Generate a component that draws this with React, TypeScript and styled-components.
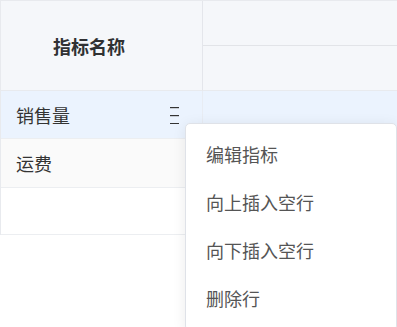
import React from "react";
import styled, { createGlobalStyle } from "styled-components";

const Global = createGlobalStyle`
  html, body { margin: 0; padding: 0; background: #fff; overflow: hidden; }
  body { font-family: "Noto Sans CJK SC", "Noto Sans", sans-serif; }
`;

const Page = styled.div`
  position: relative;
  width: 397px;
  height: 327px;
  overflow: hidden;
`;

const Table = styled.div`
  display: grid;
  grid-template-columns: 202px 260px;
  border-top: 1px solid #e8eaee;
  border-left: 1px solid #e8eaee;
  width: 462px;
`;

const HeadCell = styled.div`
  grid-row: span 2;
  height: 90px;
  box-sizing: border-box;
  background: #f5f7fa;
  border-right: 1px solid #e4e6eb;
  border-bottom: 1px solid #e8eaee;
  display: flex;
  align-items: center;
  padding-left: 52px;
  font-size: 18px;
  font-weight: 700;
  color: #303133;
`;

const HeadSub = styled.div<{ $last?: boolean }>`
  height: 45px;
  box-sizing: border-box;
  background: #f5f7fa;
  border-bottom: 1px solid ${(p) => (p.$last ? "#e8eaee" : "#e2e4e8")};
`;

const Cell = styled.div<{ $bg: string; $line?: boolean; $h: number }>`
  height: ${(p) => p.$h}px;
  box-sizing: border-box;
  background: ${(p) => p.$bg};
  border-bottom: 1px solid #eceef1;
  border-right: ${(p) => (p.$line ? "1px solid #e8ecf3" : "none")};
  display: flex;
  align-items: center;
  justify-content: space-between;
  padding: 0 23px 0 15px;
  font-size: 18px;
  color: #333;
`;

const MenuIcon = styled.svg`
  width: 9px;
  height: 17px;
  margin-top: 2px;
`;

const Popup = styled.div`
  position: absolute;
  left: 185px;
  top: 123px;
  width: 212px;
  box-sizing: border-box;
  padding: 6px 0 8px;
  background: #fff;
  border: 1px solid #dfe2e8;
  border-radius: 5px;
  box-shadow: 0 2px 14px rgba(0, 0, 0, 0.08);
`;

const Item = styled.div`
  height: 48px;
  display: flex;
  align-items: center;
  padding-left: 20px;
  font-size: 18px;
  color: #555;
`;

const rows = [
  { name: "销售量", bg: "#ebf3fe", icon: true, h: 48 },
  { name: "运费", bg: "#fafafa", icon: false, h: 49 },
  { name: "", bg: "#ffffff", icon: false, h: 47 },
];

export default function App() {
  return (
    <Page>
      <Global />
      <Table>
        <HeadCell>指标名称</HeadCell>
        <HeadSub />
        <HeadSub $last />
        {rows.map((r, i) => (
          <React.Fragment key={i}>
            <Cell $bg={r.bg} $h={r.h} $line>
              <span>{r.name}</span>
              {r.icon && (
                <MenuIcon viewBox="0 0 9 17">
                  <rect x="0" y="0" width="9" height="1.2" fill="#333" />
                  <rect x="0" y="8" width="9" height="1.2" fill="#333" />
                  <rect x="0" y="16" width="9" height="1.2" fill="#333" />
                </MenuIcon>
              )}
            </Cell>
            <Cell $bg={r.bg} $h={r.h} />
          </React.Fragment>
        ))}
      </Table>
      <Popup>
        <Item>编辑指标</Item>
        <Item>向上插入空行</Item>
        <Item>向下插入空行</Item>
        <Item>删除行</Item>
      </Popup>
    </Page>
  );
}
